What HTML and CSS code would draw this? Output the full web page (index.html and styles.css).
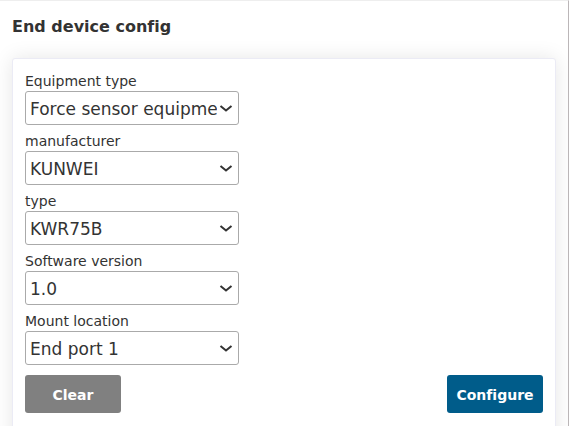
FILE: index.html
```html
<!DOCTYPE html>
<html lang="en">
<head>
<meta charset="utf-8">
<title>End device config</title>
<link rel="stylesheet" href="styles.css">
</head>
<body>
<main class="panel">
  <h1 class="title">End device config</h1>
  <form class="card">
    <div class="field">
      <label for="equipment">Equipment type</label>
      <div class="picker">
        <select id="equipment"><option>Force sensor equipment</option></select>
        <svg class="chevron" viewBox="0 0 28 16" aria-hidden="true"><path d="M3 4 14 13 25 4"/></svg>
      </div>
    </div>
    <div class="field">
      <label for="manufacturer">manufacturer</label>
      <div class="picker">
        <select id="manufacturer"><option>KUNWEI</option></select>
        <svg class="chevron" viewBox="0 0 28 16" aria-hidden="true"><path d="M3 4 14 13 25 4"/></svg>
      </div>
    </div>
    <div class="field">
      <label for="type">type</label>
      <div class="picker">
        <select id="type"><option>KWR75B</option></select>
        <svg class="chevron" viewBox="0 0 28 16" aria-hidden="true"><path d="M3 4 14 13 25 4"/></svg>
      </div>
    </div>
    <div class="field">
      <label for="version">Software version</label>
      <div class="picker">
        <select id="version"><option>1.0</option></select>
        <svg class="chevron" viewBox="0 0 28 16" aria-hidden="true"><path d="M3 4 14 13 25 4"/></svg>
      </div>
    </div>
    <div class="field">
      <label for="location">Mount location</label>
      <div class="picker">
        <select id="location"><option>End port 1</option></select>
        <svg class="chevron" viewBox="0 0 28 16" aria-hidden="true"><path d="M3 4 14 13 25 4"/></svg>
      </div>
    </div>
    <div class="actions">
      <button class="button clear" type="button">Clear</button>
      <button class="button configure" type="button">Configure</button>
    </div>
  </form>
</main>
</body>
</html>
```
FILE: styles.css
```css
* {
  box-sizing: border-box;
}

body {
  margin: 0;
  background: #fff;
  color: #333;
  font-family: Verdana, "DejaVu Sans", sans-serif;
  font-size: 14px;
  font-variant-ligatures: none;
}

.panel {
  min-height: 100vh;
  padding: 16px 12px 0;
  border-top: 1px solid #eee;
  border-right: 1px solid #bbb6b8;
  overflow: hidden;
}

.title {
  margin: 0 0 21px;
  font-size: 16px;
  line-height: 20px;
}

.card {
  padding: 12px 12px 32px;
  border: 1px solid #ebebf5;
  border-radius: 3px;
  background: #fff;
  box-shadow: 0 0 20px rgba(0, 0, 0, 0.1);
}

.field {
  margin-bottom: 6px;
}

.field label {
  display: block;
  line-height: 20px;
}

.picker {
  position: relative;
  width: 214px;
  max-width: 100%;
}

.picker select {
  display: block;
  width: 100%;
  height: 34px;
  padding: 1px 21px 0 4px;
  border: 1px solid #aaa;
  border-radius: 3px;
  appearance: none;
  background: #fff;
  color: #333;
  font-family: inherit;
  font-size: 17px;
}

.chevron {
  position: absolute;
  top: 13px;
  right: 6px;
  width: 14px;
  height: 8px;
  fill: none;
  stroke: #333;
  stroke-width: 4;
  pointer-events: none;
}

.actions {
  display: flex;
  justify-content: space-between;
  margin-top: 10px;
}

.button {
  width: 96px;
  height: 38px;
  padding: 1px 0 0;
  border: 0;
  border-radius: 3px;
  color: #fff;
  font-family: inherit;
  font-size: 14px;
  font-weight: bold;
  font-variant-ligatures: none;
}

.clear {
  background: #808080;
}

.configure {
  background: #005c8a;
}
```
